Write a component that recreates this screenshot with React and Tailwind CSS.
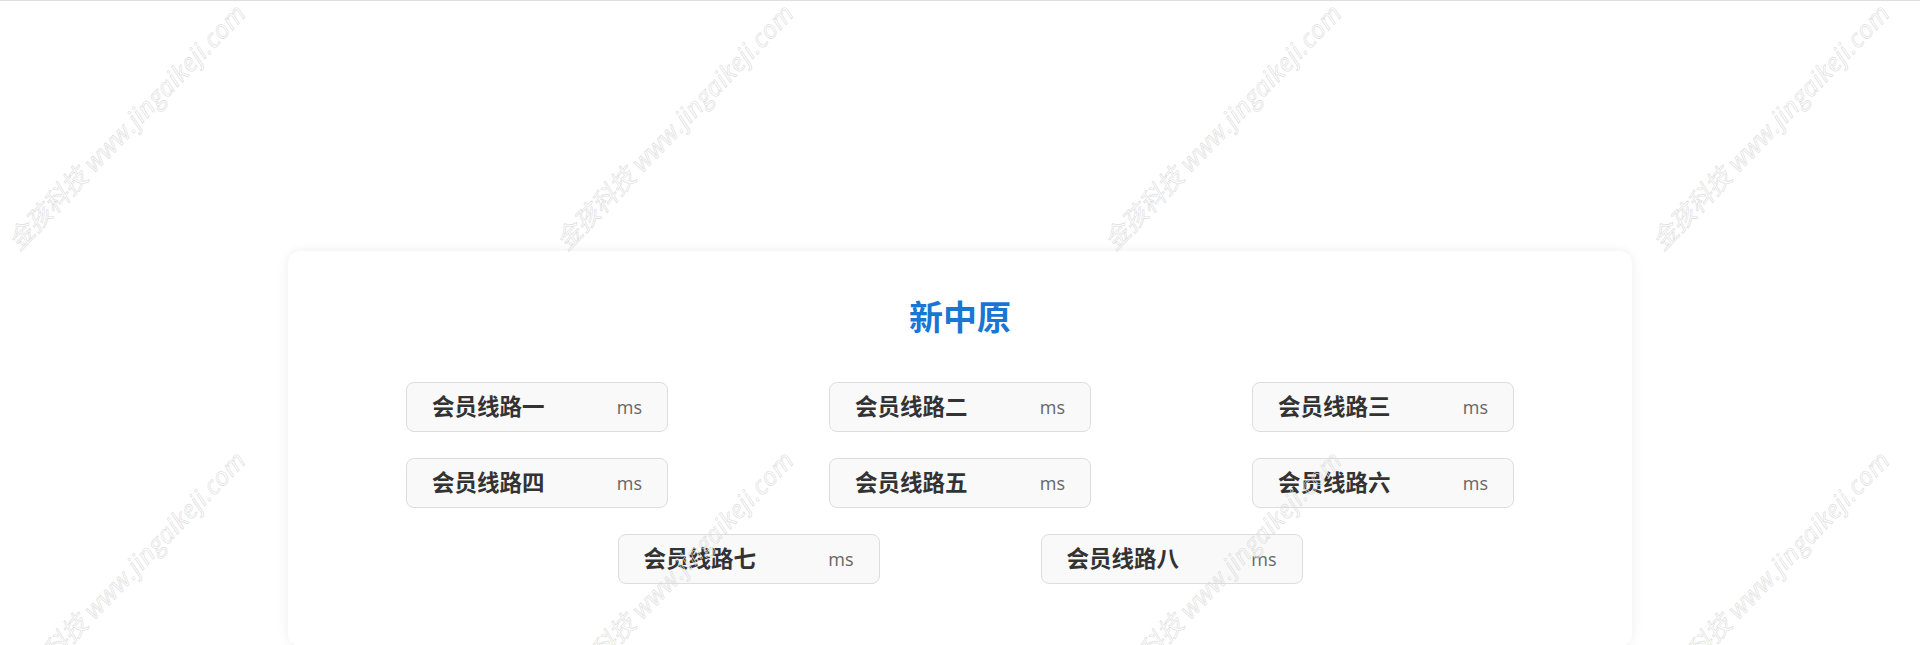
const lines = ['会员线路一', '会员线路二', '会员线路三', '会员线路四', '会员线路五', '会员线路六', '会员线路七', '会员线路八']

const marks = Array.from({ length: 8 })

export default function App() {
  return (
    <div className="relative min-h-screen overflow-hidden bg-white border-t border-[#dedede] font-['Open_Sans','Noto_Sans_CJK_SC',sans-serif]">
      {/* page body */}
      <div className="pt-[250px]">
        <div className="mx-auto w-[1344px] rounded-[12px] bg-white pt-[40px] pb-[62px] shadow-[0_0_12px_rgba(0,0,0,0.07)]">
          <h1 className="text-center text-[34px] leading-[52px] font-bold text-[#1976d2]">新中原</h1>
          <div className="mt-[39px] flex flex-wrap justify-center gap-x-[161px] gap-y-[26px]">
            {lines.map((name) => (
              <div
                key={name}
                className="flex h-[50px] w-[262px] items-center justify-between rounded-[8px] border border-[#dddddd] bg-[#f9f9f9] px-[25px]"
              >
                <span className="text-[22.5px] font-bold text-[#333333]">{name}</span>
                <span className="text-[18px] text-[#666666]">ms</span>
              </div>
            ))}
          </div>
        </div>
      </div>

      {/* watermark overlay */}
      <div className="pointer-events-none absolute inset-0 z-10 overflow-hidden">
        <div className="ml-[-147px] mt-[-98px] grid grid-cols-[repeat(4,548px)] auto-rows-[447px]">
          {marks.map((_, i) => (
            <div key={i} className="flex items-center justify-center">
              <span className="rotate-[-46deg] whitespace-nowrap text-[25px] italic tracking-[0.5px] text-transparent [-webkit-text-stroke:0.6px_#dcdcdc]">
                金孩科技 www.jingaikeji.com
              </span>
            </div>
          ))}
        </div>
      </div>
    </div>
  )
}
